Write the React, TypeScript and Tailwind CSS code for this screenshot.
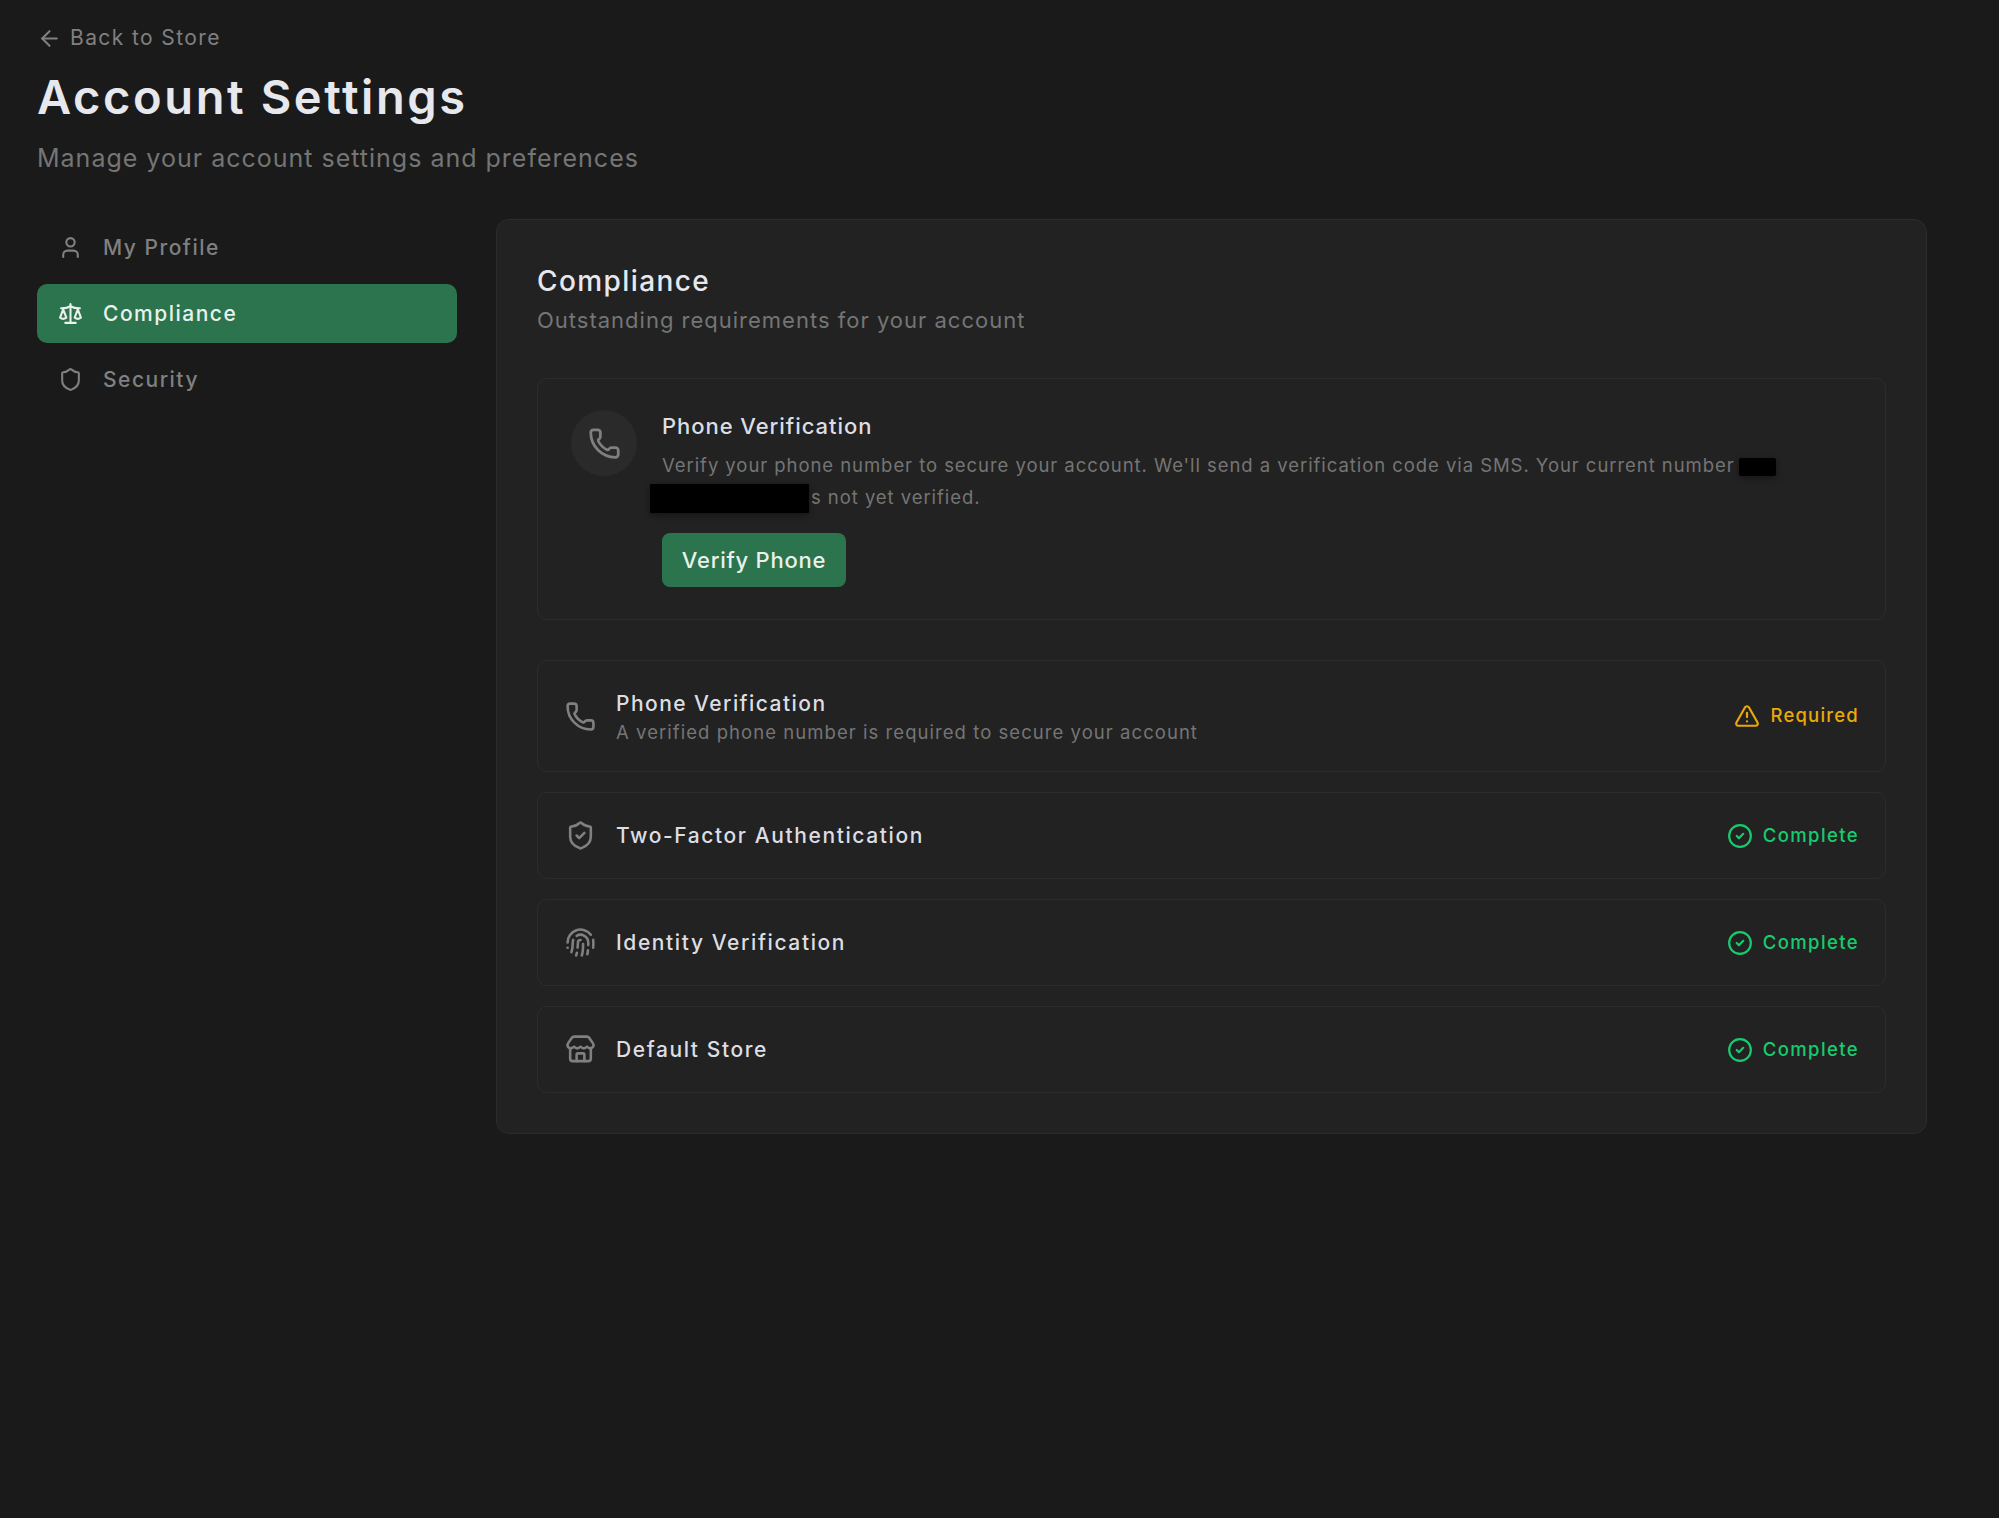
import { ArrowLeft, User, Scale, Shield, Phone, ShieldCheck, Fingerprint, Store, TriangleAlert, CircleCheck } from "lucide-react";

function Complete() {
  return (
    <div className="flex items-center gap-[10px] text-[#16cc6e]">
      <CircleCheck className="w-[26px] h-[26px]" strokeWidth={2} />
      <span className="text-[18.5px] leading-[26px] font-medium tracking-[1.4px] -mt-[2px]">Complete</span>
    </div>
  );
}

function Row({ icon, title }: { icon: React.ReactNode; title: string }) {
  return (
    <div className="flex items-center justify-between h-[87px] pl-[27px] pr-[26px] rounded-[10px] border border-[#2c2c2c]">
      <div className="flex items-center gap-[20px]">
        {icon}
        <span className="text-[21px] leading-[28px] font-medium text-[#dcdee3] tracking-[1.6px]">{title}</span>
      </div>
      <Complete />
    </div>
  );
}

export default function App() {
  const nav = "flex items-center gap-[20px] h-[59px] pl-[21px] rounded-[10px] text-[21px] tracking-[1.5px] font-medium";
  return (
    <div className="min-h-[1518px] bg-[#1a1a1a] pl-[37px] pr-[72px] pt-[25px]" style={{ fontFamily: "Inter, sans-serif" }}>
      <div className="flex items-center gap-[8px] h-[26px] text-[#808080]">
        <ArrowLeft className="w-[25px] h-[25px]" strokeWidth={2} />
        <span className="text-[21px] leading-[26px] tracking-[1.4px]">Back to Store</span>
      </div>
      <h1 className="mt-[16px] text-[47px] leading-[60px] font-semibold text-[#e6e8ee] tracking-[2.6px]">Account Settings</h1>
      <p className="mt-[16px] text-[25px] leading-[31px] text-[#757575] tracking-[1px]">Manage your account settings and preferences</p>
      <div className="mt-[44px] flex gap-[39px] items-start">
        <nav className="w-[420px] shrink-0 flex flex-col gap-[7px]">
          <div className={nav + " text-[#808080]"}><User className="w-[25px] h-[25px]" strokeWidth={2} />My Profile</div>
          <div className={nav + " bg-[#2b744e] text-[#e9f1ec]"}><Scale className="w-[25px] h-[25px]" strokeWidth={2} />Compliance</div>
          <div className={nav + " text-[#808080]"}><Shield className="w-[25px] h-[25px]" strokeWidth={2} />Security</div>
        </nav>
        <main className="flex-1 mt-[1px] rounded-[13px] border border-[#2c2c2c] bg-[#222222] px-[40px] pt-[43px] pb-[40px]">
          <h2 className="text-[28px] leading-[36px] font-medium text-[#e6e8ee] tracking-[1.4px]">Compliance</h2>
          <p className="mt-[5px] text-[22px] leading-[32px] text-[#757575] tracking-[1px]">Outstanding requirements for your account</p>
          <section className="mt-[42px] h-[242px] rounded-[10px] border border-[#2c2c2c] pl-[33px] pt-[31px] flex gap-[25px]">
            <div className="w-[66px] h-[66px] rounded-full bg-[#2a2a2a] flex items-center justify-center shrink-0 text-[#808080]">
              <Phone className="w-[33px] h-[33px]" strokeWidth={2} />
            </div>
            <div className="min-w-0">
              <div className="text-[22px] leading-[28px] font-medium text-[#dcdee3] mt-[2px] tracking-[0.95px]">Phone Verification</div>
              <div className="mt-[9px] text-[18.5px] leading-[32px] text-[#757575] whitespace-nowrap tracking-[0.94px]">
                Verify your phone number to secure your account. We'll send a verification code via SMS. Your current number
                <span className="inline-block w-[37px] h-[18px] bg-black ml-[4px] align-middle rounded-[2px] shadow-[0_2px_6px_rgba(0,0,0,0.4)]"></span>
              </div>
              <div className="text-[18.5px] leading-[32px] text-[#757575] whitespace-nowrap tracking-[0.94px]">
                <span className="inline-block w-[159px] h-[29px] bg-black -ml-[12px] mr-[2px] align-middle rounded-[1px] shadow-[0_2px_6px_rgba(0,0,0,0.4)]"></span>
                s not yet verified.
              </div>
              <button className="mt-[20px] h-[54px] w-[184px] rounded-[8px] bg-[#2b744e] text-[#e9f1ec] text-[22px] font-medium tracking-[0.75px]">Verify Phone</button>
            </div>
          </section>
          <div className="mt-[40px] flex flex-col gap-[20px]">
            <div className="flex items-center justify-between h-[112px] pl-[27px] pr-[26px] rounded-[10px] border border-[#2c2c2c]">
              <div className="flex items-center gap-[20px]">
                <Phone className="w-[31px] h-[31px] text-[#808080]" strokeWidth={2} />
                <div className="pt-[4px]">
                  <div className="text-[21px] leading-[28px] font-medium text-[#dcdee3] tracking-[1.45px]">Phone Verification</div>
                  <div className="text-[18.5px] leading-[29px] text-[#757575] tracking-[1.05px]">A verified phone number is required to secure your account</div>
                </div>
              </div>
              <div className="flex items-center gap-[10px] text-[#eaa90a]">
                <TriangleAlert className="w-[26px] h-[26px]" strokeWidth={2} />
                <span className="text-[18.5px] leading-[26px] font-medium tracking-[1.2px] -mt-[2px]">Required</span>
              </div>
            </div>
            <Row icon={<ShieldCheck className="w-[31px] h-[31px] text-[#808080]" strokeWidth={2} />} title="Two-Factor Authentication" />
            <Row icon={<Fingerprint className="w-[31px] h-[31px] text-[#808080]" strokeWidth={2} />} title="Identity Verification" />
            <Row icon={<Store className="w-[31px] h-[31px] text-[#808080]" strokeWidth={2} />} title="Default Store" />
          </div>
        </main>
      </div>
    </div>
  );
}
